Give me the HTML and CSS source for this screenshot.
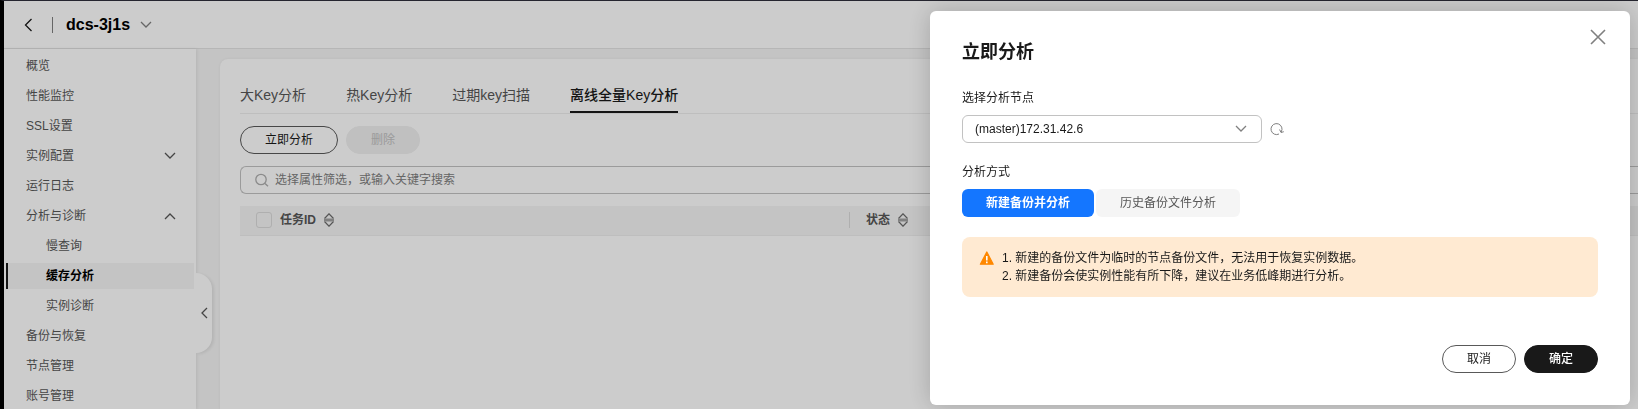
FILE: index.html
```html
<!DOCTYPE html>
<html lang="zh-CN">
<head>
<meta charset="utf-8">
<title>dcs-3j1s</title>
<link rel="stylesheet" href="styles.css">
</head>
<body>
<div class="page">
  <header class="topbar">
    <button class="icon-btn" type="button" aria-label="返回"><svg width="10" height="14" viewBox="0 0 10 14"><path d="M7.500 1 1.500 7l6 6"/></svg></button>
    <span class="topbar-divider"></span>
    <h1 class="instance-name">dcs-3j1s</h1>
    <button class="icon-btn muted" type="button" aria-label="切换实例"><svg width="12" height="8" viewBox="0 0 12 8"><path d="m1 1 5 5 5-5"/></svg></button>
  </header>
  <div class="body">
    <nav class="sidebar">
      <a class="nav-item" href="#">概览</a>
      <a class="nav-item" href="#">性能监控</a>
      <a class="nav-item" href="#">SSL设置</a>
      <a class="nav-item" href="#">实例配置<svg width="12" height="8" viewBox="0 0 12 8"><path d="m1 1 5 5 5-5"/></svg></a>
      <a class="nav-item" href="#">运行日志</a>
      <a class="nav-item" href="#">分析与诊断<svg width="12" height="8" viewBox="0 0 12 8"><path d="m1 7 5-5 5 5"/></svg></a>
      <a class="nav-item sub" href="#">慢查询</a>
      <a class="nav-item sub active" href="#">缓存分析</a>
      <a class="nav-item sub" href="#">实例诊断</a>
      <a class="nav-item" href="#">备份与恢复</a>
      <a class="nav-item" href="#">节点管理</a>
      <a class="nav-item" href="#">账号管理</a>
      <button class="collapse" type="button" aria-label="收起菜单"><svg width="8" height="12" viewBox="0 0 8 12"><path d="M7 1 2 6l5 5"/></svg></button>
    </nav>
    <main class="content">
      <section class="card">
        <div class="tabs">
          <a class="tab" href="#">大Key分析</a>
          <a class="tab" href="#">热Key分析</a>
          <a class="tab" href="#">过期key扫描</a>
          <a class="tab active" href="#">离线全量Key分析</a>
        </div>
        <div class="actions">
          <button class="pill wide" type="button">立即分析</button>
          <button class="pill" type="button" disabled>删除</button>
        </div>
        <label class="search">
          <svg width="14" height="14" viewBox="0 0 14 14"><circle cx="6" cy="6.500" r="5.200"/><path d="m10 10.500 3 2.800"/></svg>
          <input type="text" placeholder="选择属性筛选，或输入关键字搜索" aria-label="搜索">
        </label>
        <table class="tasks">
          <thead>
            <tr>
              <th class="col-id" scope="col">
                <div class="th">
                  <input type="checkbox" aria-label="全选">
                  任务ID
                  <svg class="sort" width="10" height="14" viewBox="0 0 10 14"><path d="M.5 5.500 5 .8l4.500 4.700M.5 8.500 5 13.200l4.500-4.700"/><path class="sort-bar" d="M0 7h10"/></svg>
                </div>
              </th>
              <th scope="col">
                <div class="th divided">
                  状态
                  <svg class="sort" width="10" height="14" viewBox="0 0 10 14"><path d="M.5 5.500 5 .8l4.500 4.700M.5 8.500 5 13.200l4.500-4.700"/><path class="sort-bar" d="M0 7h10"/></svg>
                </div>
              </th>
            </tr>
          </thead>
        </table>
      </section>
    </main>
  </div>
</div>

<div class="overlay">
  <form class="dialog" role="dialog" aria-labelledby="dialog-title">
    <div class="dialog-head">
      <h2 id="dialog-title">立即分析</h2>
      <button class="icon-btn muted" type="button" aria-label="关闭"><svg width="16" height="16" viewBox="0 0 16 16"><path d="m1 1 14 14M15 1 1 15" stroke-width="1.6"/></svg></button>
    </div>
    <div class="field">
      <label for="node">选择分析节点</label>
      <div class="row">
        <span class="select">
          <select id="node"><option>(master)172.31.42.6</option></select>
          <svg width="12" height="8" viewBox="0 0 12 8"><path d="m1 1 5 5 5-5"/></svg>
        </span>
        <button class="icon-btn muted" type="button" aria-label="刷新"><svg width="14" height="14" viewBox="0 0 14 14"><path d="M9 12A5.500 5.500 0 1 1 12 7.500L11.200 10M9.600 7.500l1.400 3 2.800-.8" stroke-width="1"/></svg></button>
      </div>
    </div>
    <div class="field">
      <span id="mode">分析方式</span>
      <div class="segments" role="group" aria-labelledby="mode">
        <button class="segment active" type="button">新建备份并分析</button>
        <button class="segment" type="button">历史备份文件分析</button>
      </div>
    </div>
    <div class="alert">
      <svg class="warn" width="16" height="18" viewBox="0 0 16 18"><path class="warn-fill" d="M8.800 3 15.200 15.200H2.400z"/><path class="warn-mark" d="M8.800 7v4.500M8.800 12.500v1.700"/></svg>
      <p>1. 新建的备份文件为临时的节点备份文件，无法用于恢复实例数据。<br>2. 新建备份会使实例性能有所下降，建议在业务低峰期进行分析。</p>
    </div>
    <div class="dialog-foot">
      <button class="pill" type="button">取消</button>
      <button class="pill primary" type="submit">确定</button>
    </div>
  </form>
</div>
</body>
</html>
```

FILE: styles.css
```css
* { box-sizing: border-box; }

body {
  margin: 0;
  height: 100vh;
  overflow: hidden;
  color: #191919;
  font: 12px/18px "Liberation Sans", "Noto Sans CJK SC", sans-serif;
}

button, input, select { font: inherit; color: inherit; }
button { cursor: pointer; }
a { color: inherit; text-decoration: none; }
h1, h2, p { margin: 0; }
svg { flex: none; fill: none; stroke: currentColor; stroke-width: 1.3; }

.page {
  display: flex;
  flex-direction: column;
  height: 100%;
  border-top: 1px solid #25252f;
  border-left: 4px solid #000;
  background: #f5f5f5;
}

.icon-btn {
  display: flex;
  padding: 0;
  border: 0;
  background: none;
}
.muted { color: #808080; }

.topbar {
  display: flex;
  align-items: center;
  flex: none;
  height: 48px;
  padding-left: 20px;
  border-bottom: 1px solid #e4e4e4;
  background: #fff;
}
.topbar-divider {
  width: 1px;
  height: 16px;
  margin: 0 13px 0 18px;
  background: #808080;
}
.instance-name {
  margin-right: 10px;
  color: #000;
  font-size: 16px;
  line-height: 24px;
}

.body { display: flex; flex: 1; min-height: 0; }

.sidebar {
  position: relative;
  display: flex;
  flex-direction: column;
  flex: none;
  gap: 4px;
  width: 192px;
  padding: 4px 2px;
  background: #fff;
  box-shadow: 1px 0 3px rgba(0, 0, 0, .08);
}
.nav-item {
  display: flex;
  flex: none;
  align-items: center;
  justify-content: space-between;
  height: 26px;
  padding: 0 18px;
  border-left: 2px solid transparent;
  color: #575757;
}
.nav-item.sub { padding-left: 38px; }
.nav-item.active {
  border-left-color: #191919;
  background: #f5f5f5;
  color: #000;
  font-weight: 700;
}
.collapse {
  position: absolute;
  top: 224px;
  left: 100%;
  display: flex;
  align-items: center;
  justify-content: center;
  width: 16px;
  height: 80px;
  padding: 0;
  border: 0;
  border-radius: 0 16px 16px 0;
  background: #fff;
  box-shadow: 2px 1px 3px rgba(0, 0, 0, .08);
  color: #575757;
}

.content { flex: 1; min-width: 0; padding: 10px 0 0 24px; }
.card {
  height: 100%;
  padding: 20px 0 0 20px;
  border-radius: 8px 0 0 0;
  background: #fff;
  box-shadow: 0 0 3px rgba(0, 0, 0, .06);
}

.tabs {
  display: flex;
  gap: 40px;
  height: 35px;
  border-bottom: 1px solid #eee;
  color: #575757;
  font-size: 14px;
}
.tab { height: 34px; line-height: 32px; }
.tab.active {
  border-bottom: 2px solid #191919;
  color: #191919;
  font-weight: 500;
}

.actions { display: flex; gap: 8px; margin: 12px 0; }
.pill {
  min-width: 74px;
  height: 28px;
  padding: 0 24px;
  border: 1px solid #595959;
  border-radius: 14px;
  background: #fff;
}
.pill.wide { min-width: 98px; }
.pill:disabled {
  border-color: #f0f0f0;
  background: #f0f0f0;
  color: #c2c2c2;
}
.pill.primary {
  border-color: #191919;
  background: #191919;
  color: #fff;
  font-weight: 500;
}

.search {
  display: flex;
  align-items: center;
  gap: 6px;
  height: 28px;
  padding-left: 14px;
  border: 1px solid #c2c2c2;
  border-right: 0;
  border-radius: 6px 0 0 6px;
  color: #aeaeae;
}
.search input {
  flex: 1;
  padding: 0;
  border: 0;
  outline: 0;
  background: none;
}
.search input::placeholder { color: #808080; opacity: 1; }

.tasks {
  width: 100%;
  margin-top: 12px;
  border-collapse: collapse;
  table-layout: fixed;
  background: #f5f5f5;
  color: #575757;
}
.tasks th {
  height: 29px;
  padding: 0;
  border-bottom: 1px solid #eee;
  text-align: left;
}
.col-id { width: 609px; }
.th {
  display: flex;
  align-items: center;
  gap: 8px;
  height: 16px;
  padding-left: 16px;
}
.th.divided { border-left: 1px solid #dbdbdb; }
.th input {
  appearance: none;
  width: 16px;
  height: 16px;
  margin: 0;
  border: 1px solid #dbdbdb;
  border-radius: 3px;
}
.sort { stroke-width: 1.2; color: #6b6b6b; }
.sort-bar { stroke: #a0a0a0; stroke-width: 3; }

.overlay {
  position: fixed;
  inset: 1px 0 0 4px;
  display: flex;
  justify-content: flex-end;
  padding: 10px 8px 4px;
  background: rgba(0, 0, 0, .2);
}
.dialog {
  display: flex;
  flex-direction: column;
  width: 100%;
  max-width: 700px;
  padding: 24px 32px 32px;
  border-radius: 6px;
  background: #fff;
  box-shadow: 0 0 24px rgba(0, 0, 0, .2);
}
.dialog-head {
  display: flex;
  align-items: flex-start;
  justify-content: space-between;
}
.dialog-head h2 { padding-top: 2px; font-size: 18px; line-height: 30px; }
.dialog-head .icon-btn { margin: -6px -8px 0 0; }
.field { display: flex; flex-direction: column; gap: 8px; margin-top: 20px; }
.dialog-head + .field { margin-top: 22px; }
.row { display: flex; align-items: center; gap: 8px; }
.select {
  display: grid;
  grid-template-columns: 1fr auto;
  align-items: center;
  width: 300px;
}
.select select {
  appearance: none;
  grid-area: 1 / 1 / 2 / 3;
  height: 28px;
  padding: 0 36px 0 12px;
  border: 1px solid #c2c2c2;
  border-radius: 6px;
  background: #fff;
}
.select svg {
  grid-area: 1 / 2;
  z-index: 1;
  margin-right: 15px;
  color: #808080;
  pointer-events: none;
}
.segments { display: flex; gap: 2px; }
.segment {
  height: 28px;
  padding: 0 24px;
  border: 0;
  border-radius: 6px;
  background: #f5f5f5;
  color: #575757;
}
.segment.active { background: #1476ff; color: #fff; font-weight: 700; }
.alert {
  display: flex;
  gap: 8px;
  min-height: 60px;
  margin-top: 20px;
  padding: 12px 16px;
  border-radius: 8px;
  background: #ffead2;
}
.warn-fill { fill: #ff8800; stroke: #ff8800; stroke-linejoin: round; }
.warn-mark { stroke: #fff; stroke-width: 1.6; }
.dialog-foot {
  display: flex;
  justify-content: flex-end;
  gap: 8px;
  margin-top: auto;
}
```
